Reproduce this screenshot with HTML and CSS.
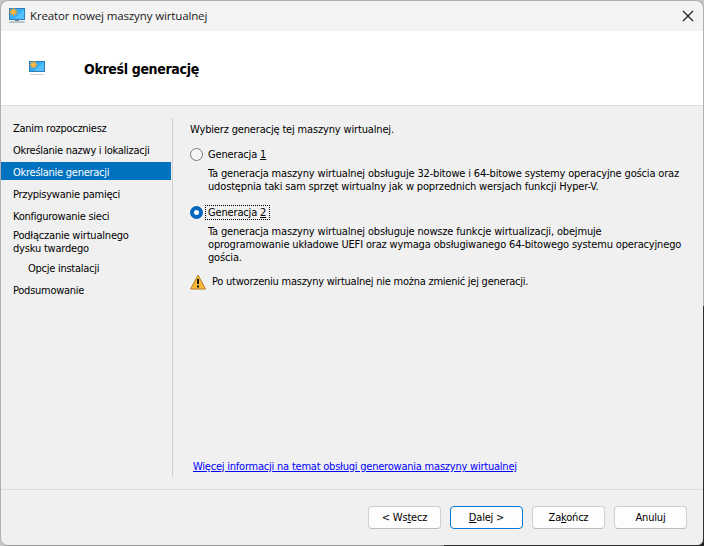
FILE: index.html
```html
<!DOCTYPE html>
<html lang="pl">
<head>
<meta charset="utf-8">
<title>Kreator nowej maszyny wirtualnej</title>
<link rel="stylesheet" href="styles.css">
</head>
<body>
<div class="desktop">
<div class="window">
  <header class="titlebar">
    <svg class="app-icon" width="16" height="16" viewBox="0 0 16 16">
      <rect x="0" y="0" width="16" height="12" fill="#2f7fb5"/>
      <rect x="1" y="1" width="14" height="10" fill="#35adf8"/>
      <path d="M15 1V11H5z" fill="#55c0ff"/>
      <path d="M6 12h4v1H6z" fill="#6d8ba3"/>
      <path d="M0 15v-1l2-1h12l2 1v1z" fill="#b4c2cc"/>
      <path d="M4.500 0v8M0.500 4h8M1.700 1.200l5.600 5.600M7.300 1.200L1.700 6.800" stroke="#f0a52a" stroke-width="1.300"/>
      <circle cx="4.500" cy="4" r="2" fill="#ffbd3f"/>
    </svg>
    <h1 class="title">Kreator nowej maszyny wirtualnej</h1>
    <svg class="close" width="12" height="12" viewBox="0 0 12 12"><path d="M1 1l10 10M11 1L1 11" fill="none" stroke="#1a1a1a" stroke-width="1.100"/></svg>
  </header>
  <div class="banner">
    <svg class="banner-icon" width="16" height="16" viewBox="0 0 16 16">
      <rect x="0" y="1" width="16" height="11" fill="#2f7fb5"/>
      <rect x="1" y="2" width="14" height="9" fill="#35adf8"/>
      <path d="M15 2V11H5z" fill="#55c0ff"/>
      <path d="M1 14.500h14" stroke="#c8d4dd"/>
      <path d="M4.500 1v7.500M.7 4.700h7.600M1.800 2l5.400 5.400M7.200 2L1.800 7.400" stroke="#f0a52a" stroke-width="1.200"/>
      <circle cx="4.500" cy="4.700" r="2" fill="#ffbd3f"/>
    </svg>
    <h2 class="heading">Określ generację</h2>
  </div>
  <div class="body">
    <nav class="steps">
      <div class="step">Zanim rozpoczniesz</div>
      <div class="step">Określanie nazwy i lokalizacji</div>
      <div class="step current">Określanie generacji</div>
      <div class="step">Przypisywanie pamięci</div>
      <div class="step">Konfigurowanie sieci</div>
      <div class="step two-line">Podłączanie wirtualnego<br>dysku twardego</div>
      <div class="step sub">Opcje instalacji</div>
      <div class="step last">Podsumowanie</div>
    </nav>
    <main class="content">
      <p class="intro">Wybierz generację tej maszyny wirtualnej.</p>
      <div class="option">
        <span class="radio"></span>
        <span class="option-label">Generacja <u>1</u></span>
      </div>
      <p class="desc">Ta generacja maszyny wirtualnej obsługuje 32-bitowe i 64-bitowe systemy operacyjne gościa oraz<br>udostępnia taki sam sprzęt wirtualny jak w poprzednich wersjach funkcji Hyper-V.</p>
      <div class="option second">
        <span class="radio checked"></span>
        <span class="option-label focused">Generacja <u>2</u></span>
      </div>
      <p class="desc">Ta generacja maszyny wirtualnej obsługuje nowsze funkcje wirtualizacji, obejmuje<br>oprogramowanie układowe UEFI oraz wymaga obsługiwanego 64-bitowego systemu operacyjnego<br>gościa.</p>
      <div class="warning">
        <svg width="16" height="16" viewBox="0 0 16 16"><path d="M8 1L15.400 15H.6z" fill="#f9b836" stroke="#b87a26" stroke-linejoin="round"/><path d="M7 5h2v5H7zM7 11.500h2v2H7z" fill="#111"/></svg>
        <span>Po utworzeniu maszyny wirtualnej nie można zmienić jej generacji.</span>
      </div>
      <a class="more">Więcej informacji na temat obsługi generowania maszyny wirtualnej</a>
    </main>
  </div>
  <footer class="buttons">
    <button class="button">&lt; Ws<u>t</u>ecz</button>
    <button class="button default"><u>D</u>alej &gt;</button>
    <button class="button">Za<u>k</u>ończ</button>
    <button class="button">Anuluj</button>
  </footer>
</div>
</div>
</body>
</html>
```
FILE: styles.css
```css
* { box-sizing: border-box; }
body { margin: 0; }
h1, h2, p { margin: 0; font-weight: normal; }

.desktop {
  width: 704px;
  height: 546px;
  overflow: hidden;
  background: linear-gradient(#c8c8c8, #c8c8c8) 0 0 / 350px 100% no-repeat,
    linear-gradient(#c8c8c8 0 306px, #202020 0);
}
.window {
  display: flex;
  flex-direction: column;
  width: 704px;
  height: 546px;
  padding: 1px;
  overflow: hidden;
  border-radius: 8px;
  background:
    linear-gradient(90deg, #999 0 444px, #303030 0) 0 100% / 100% 1px no-repeat,
    linear-gradient(#b0b0b0 0 306px, #303030 0) 100% 0 / 1px 100% no-repeat,
    #b0b0b0;
  color: #000;
  font: 11px/13px "DejaVu Sans Condensed", "DejaVu Sans", sans-serif;
  letter-spacing: -0.16px;
  white-space: nowrap;
}
.titlebar {
  display: flex;
  align-items: center;
  height: 30px;
  padding: 0 9px 0 8px;
  border-radius: 7px 7px 0 0;
  background: #f3f3f3;
}
.app-icon { margin-right: 5px; }
.title {
  flex: 1;
  color: #1a1a1a;
  font: 11.5px/16px "Open Sans", sans-serif;
  letter-spacing: -0.13px;
}
.banner {
  display: flex;
  align-items: center;
  height: 75px;
  padding-left: 28px;
  border-bottom: 1px solid #dcdcdc;
  background: #fff;
}
.banner-icon { margin-right: 39px; }
.heading {
  padding-top: 2px;
  font-size: 14px;
  line-height: 18px;
  font-weight: bold;
  letter-spacing: -0.33px;
}
.body {
  display: flex;
  height: 383px;
  padding: 12px 0;
  background: #f0f0f0;
}
.steps {
  width: 172px;
  height: 359px;
  border-right: 1px solid #cfcfcf;
  letter-spacing: -0.26px;
}
.step {
  height: 18px;
  margin: 0 1px 4px 0;
  padding: 4px 0 0 12px;
}
.step.current { background: #0072c0; color: #fff; }
.step.two-line {
  height: 30px;
  margin-top: 1px;
  margin-bottom: 1px;
  padding-top: 1px;
  letter-spacing: -0.2px;
}
.step.sub { padding: 3px 0 0 27px; }
.step.last { padding-top: 3px; }
.content {
  display: flex;
  flex: 1;
  flex-direction: column;
  align-items: flex-start;
  padding: 5px 0 0 17px;
}
.option {
  display: flex;
  align-items: center;
  height: 16px;
  margin-top: 10px;
}
.option.second { margin-top: 11px; }
.radio {
  width: 13px;
  height: 13px;
  border: 1px solid #777;
  border-radius: 50%;
  background: #f6f6f6;
}
.radio.checked { border: 4px solid #0067c0; background: #fff; }
.option-label { margin-left: 3px; padding: 0 3px 0 2px; line-height: 13px; }
.option-label.focused { outline: 1px dotted #000; }
.desc { margin: 5px 0 0 18px; }
.warning {
  display: flex;
  margin-top: 10px;
  letter-spacing: -0.24px;
}
.warning span { margin: 1px 0 0 6px; }
.more {
  margin: auto 0 4px 3px;
  color: #00f;
  letter-spacing: -0.22px;
  text-decoration: underline;
}
.buttons {
  display: flex;
  flex: 1;
  justify-content: flex-end;
  gap: 9px;
  padding: 16px 16px 0 0;
  border-top: 1px solid #dcdcdc;
  border-radius: 0 0 7px 7px;
  background: #f0f0f0;
}
.button {
  width: 73px;
  height: 23px;
  padding: 0;
  border: 1px solid #d0d0d0;
  border-bottom-color: #bbb;
  border-radius: 4px;
  background: #fdfdfd;
  color: #000;
  font: inherit;
  letter-spacing: -0.2px;
}
.button.default { border-color: #0078d4; }
u { text-underline-offset: 1px; }
```
